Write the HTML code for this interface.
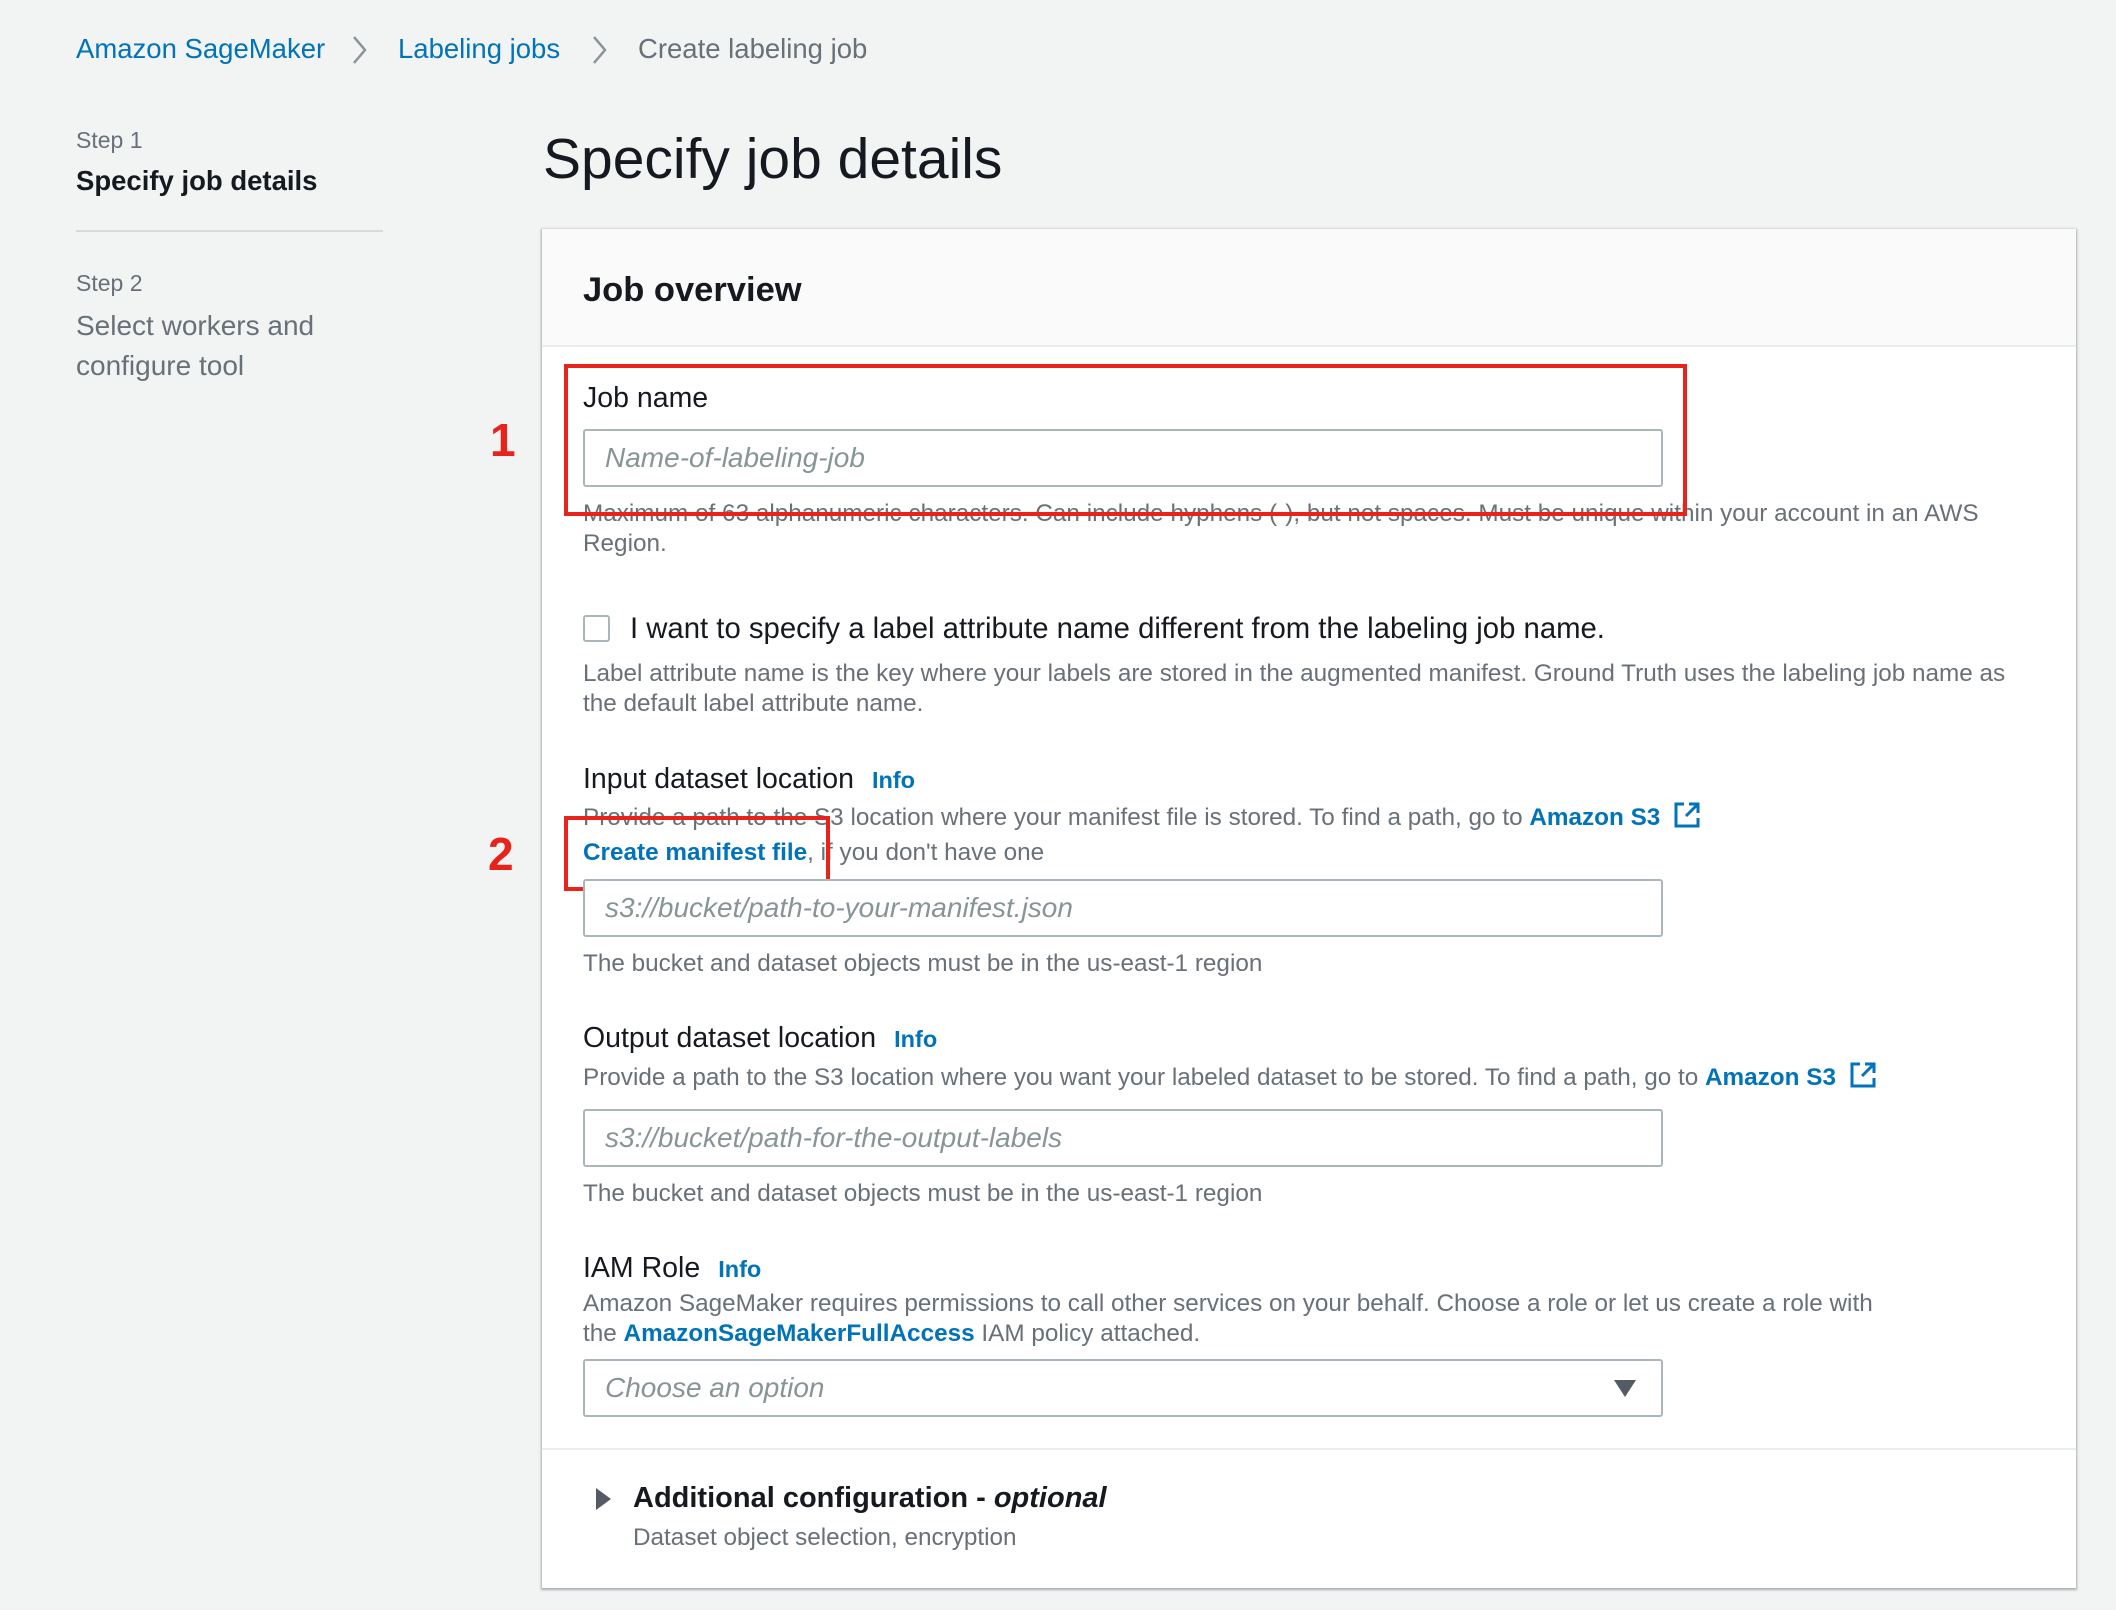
<!DOCTYPE html>
<html><head><meta charset="utf-8"><style>
*{margin:0;padding:0;box-sizing:border-box}
body{width:2116px;height:1610px;background:#f2f3f3;font-family:"Liberation Sans",sans-serif;color:#16191f;position:relative;overflow:hidden}
.a{position:absolute;white-space:nowrap}
.blue{color:#0073bb}
.g{color:#687078}
.d{font-size:24.3px;color:#687078;line-height:30px}
.lbl{font-size:28.5px;color:#16191f}
.info{font-size:23.5px;font-weight:bold;color:#0073bb;margin-left:18px}
.inp{position:absolute;left:583px;width:1080px;height:58px;border:2px solid #aab7b8;border-radius:3px;background:#fff;font-style:italic;color:#879596;font-size:28px;padding:11px 20px}
.red{position:absolute;border:4px solid #e8231b}
.num{position:absolute;color:#e8231b;font-weight:bold;font-size:46px}
</style></head><body>
<div class="a" style="left:76px;top:33px;font-size:27.5px"><span class="blue">Amazon SageMaker</span></div>
<svg class="a" style="left:350px;top:34px" width="20" height="32"><path d="M4 3 L15 16 L4 29" fill="none" stroke="#879596" stroke-width="2.5"/></svg>
<div class="a blue" style="left:398px;top:33px;font-size:27.5px">Labeling jobs</div>
<svg class="a" style="left:590px;top:34px" width="20" height="32"><path d="M4 3 L15 16 L4 29" fill="none" stroke="#879596" stroke-width="2.5"/></svg>
<div class="a g" style="left:638px;top:33px;font-size:27.5px">Create labeling job</div>

<div class="a g" style="left:76px;top:127px;font-size:23px">Step 1</div>
<div class="a" style="left:76px;top:165px;font-size:27.5px;font-weight:bold">Specify job details</div>
<div class="a" style="left:76px;top:230px;width:307px;height:2px;background:#d5dbdb"></div>
<div class="a g" style="left:76px;top:270px;font-size:23px">Step 2</div>
<div class="a g" style="left:76px;top:306px;font-size:28px;line-height:40px">Select workers and<br>configure tool</div>

<div class="a" style="left:543px;top:126px;font-size:57px">Specify job details</div>

<div class="a" style="left:542px;top:229px;width:1534px;height:1359px;background:#fff;box-shadow:0 1px 2px 1px rgba(0,28,36,.3)">
 <div style="height:118px;background:#fafafa;border-bottom:2px solid #eaeded"></div>
 <div style="position:absolute;left:0;right:0;top:1219px;height:2px;background:#eaeded"></div>
</div>
<div class="a" style="left:583px;top:271px;font-size:34.5px;font-weight:bold">Job overview</div>

<div class="a lbl" style="left:583px;top:382px">Job name</div>
<div class="inp" style="top:429px">Name-of-labeling-job</div>
<div class="a d" style="left:583px;top:499px">Maximum of 63 alphanumeric characters. Can include hyphens (-), but not spaces. Must be unique within your account in an AWS<br>Region.</div>
<div class="red" style="left:564px;top:364px;width:1123px;height:152px"></div>
<div class="num" style="left:490px;top:413px">1</div>

<div class="a" style="left:583px;top:615px;width:27px;height:27px;border:2px solid #aab7b8;border-radius:3px;background:#fff"></div>
<div class="a" style="left:630px;top:612px;font-size:29.3px">I want to specify a label attribute name different from the labeling job name.</div>
<div class="a d" style="left:583px;top:659px">Label attribute name is the key where your labels are stored in the augmented manifest. Ground Truth uses the labeling job name as<br>the default label attribute name.</div>

<div class="a lbl" style="left:583px;top:763px">Input dataset location<span class="info">Info</span></div>
<div class="a d" style="left:583px;top:801px">Provide a path to the S3 location where your manifest file is stored. To find a path, go to <b class="blue">Amazon S3</b> <svg width="28" height="28" style="vertical-align:-4px;margin-left:6px"><path d="M11 3H3V25H25V17M16 3H25V12M25 3L13 15" fill="none" stroke="#0073bb" stroke-width="3"/></svg></div>
<div class="a d" style="left:583px;top:838px"><b class="blue">Create manifest file</b>, if you don't have one</div>
<div class="red" style="left:564px;top:816px;width:266px;height:75px"></div>
<div class="num" style="left:488px;top:827px">2</div>
<div class="inp" style="top:879px">s3://bucket/path-to-your-manifest.json</div>
<div class="a d" style="left:583px;top:949px">The bucket and dataset objects must be in the us-east-1 region</div>

<div class="a lbl" style="left:583px;top:1022px">Output dataset location<span class="info">Info</span></div>
<div class="a d" style="left:583px;top:1061px">Provide a path to the S3 location where you want your labeled dataset to be stored. To find a path, go to <b class="blue">Amazon S3</b> <svg width="28" height="28" style="vertical-align:-4px;margin-left:6px"><path d="M11 3H3V25H25V17M16 3H25V12M25 3L13 15" fill="none" stroke="#0073bb" stroke-width="3"/></svg></div>
<div class="inp" style="top:1109px">s3://bucket/path-for-the-output-labels</div>
<div class="a d" style="left:583px;top:1179px">The bucket and dataset objects must be in the us-east-1 region</div>

<div class="a lbl" style="left:583px;top:1252px">IAM Role<span class="info">Info</span></div>
<div class="a d" style="left:583px;top:1289px">Amazon SageMaker requires permissions to call other services on your behalf. Choose a role or let us create a role with<br>the <b class="blue">AmazonSageMakerFullAccess</b> IAM policy attached.</div>
<div class="inp" style="top:1359px">Choose an option</div>
<svg class="a" style="left:1614px;top:1380px" width="22" height="18"><path d="M0 0H22L11 17Z" fill="#545b64"/></svg>

<svg class="a" style="left:596px;top:1488px" width="16" height="22"><path d="M0 0L15 11L0 22Z" fill="#545b64"/></svg>
<div class="a" style="left:633px;top:1482px;font-size:29px;font-weight:bold;color:#16191f">Additional configuration - <i>optional</i></div>
<div class="a d" style="left:633px;top:1523px">Dataset object selection, encryption</div>
</body></html>
